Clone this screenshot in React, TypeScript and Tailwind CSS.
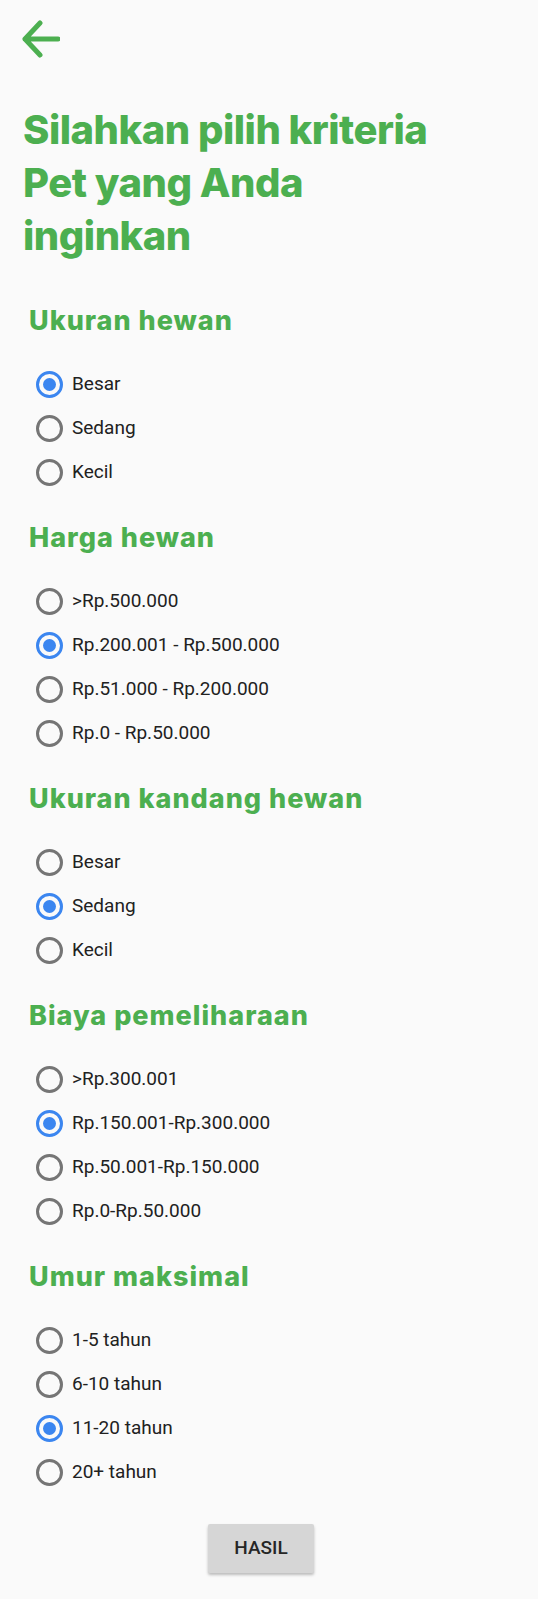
type Section = {
  title: string;
  options: string[];
  selected: number;
};

const sections: Section[] = [
  { title: "Ukuran hewan", options: ["Besar", "Sedang", "Kecil"], selected: 0 },
  {
    title: "Harga hewan",
    options: [">Rp.500.000", "Rp.200.001 - Rp.500.000", "Rp.51.000 - Rp.200.000", "Rp.0 - Rp.50.000"],
    selected: 1,
  },
  { title: "Ukuran kandang hewan", options: ["Besar", "Sedang", "Kecil"], selected: 1 },
  {
    title: "Biaya pemeliharaan",
    options: [">Rp.300.001", "Rp.150.001-Rp.300.000", "Rp.50.001-Rp.150.000", "Rp.0-Rp.50.000"],
    selected: 1,
  },
  { title: "Umur maksimal", options: ["1-5 tahun", "6-10 tahun", "11-20 tahun", "20+ tahun"], selected: 2 },
];

function Radio({ checked }: { checked: boolean }) {
  return (
    <span
      className={
        checked
          ? "flex h-[27px] w-[27px] items-center justify-center rounded-full border-[3px] border-[#3b86f0]"
          : "flex h-[27px] w-[27px] items-center justify-center rounded-full border-[3px] border-[#757575]"
      }
    >
      {checked && <span className="h-[13px] w-[13px] rounded-full bg-[#3b86f0]" />}
    </span>
  );
}

export default function App() {
  return (
    <div className="min-h-[1599px] w-full bg-[#fafafa] font-['Roboto',sans-serif]">
      <div className="pl-[20px] pt-[19px]">
        <svg width="40" height="40" viewBox="0 0 40 40" fill="none">
          <path
            d="M38 20H5M20 4L5 20L20 36"
            stroke="#4caf50"
            strokeWidth="5"
            strokeLinecap="round"
            strokeLinejoin="round"
          />
        </svg>
      </div>

      <h1 className="mt-[44px] pl-[23px] pr-[90px] font-['Inter',sans-serif] text-[40px] font-extrabold leading-[53px] tracking-[-0.5px] text-[#4caf50]">
        Silahkan pilih kriteria Pet yang Anda inginkan
      </h1>

      <div className="pl-[29px] pt-[15px]">
        {sections.map((s) => (
          <div key={s.title} className="mt-[28px]">
            <h2 className="h-[32px] font-['Inter',sans-serif] text-[27px] font-extrabold leading-[32px] tracking-[1px] text-[#4caf50]">
              {s.title}
            </h2>
            <div className="mt-[25px] pl-[7px]">
              {s.options.map((o, i) => (
                <label key={o} className="flex h-[44px] items-center gap-[9px]">
                  <Radio checked={i === s.selected} />
                  <span className="text-[19px] text-[#212121]">{o}</span>
                </label>
              ))}
            </div>
          </div>
        ))}
      </div>

      <div className="mt-[30px] flex justify-center pr-4">
        <button className="h-[49px] w-[106px] rounded-[2px] bg-[#d6d6d6] text-[19px] font-medium text-[#262626] shadow-[0_2px_3px_rgba(0,0,0,0.25)]">
          HASIL
        </button>
      </div>
    </div>
  );
}
